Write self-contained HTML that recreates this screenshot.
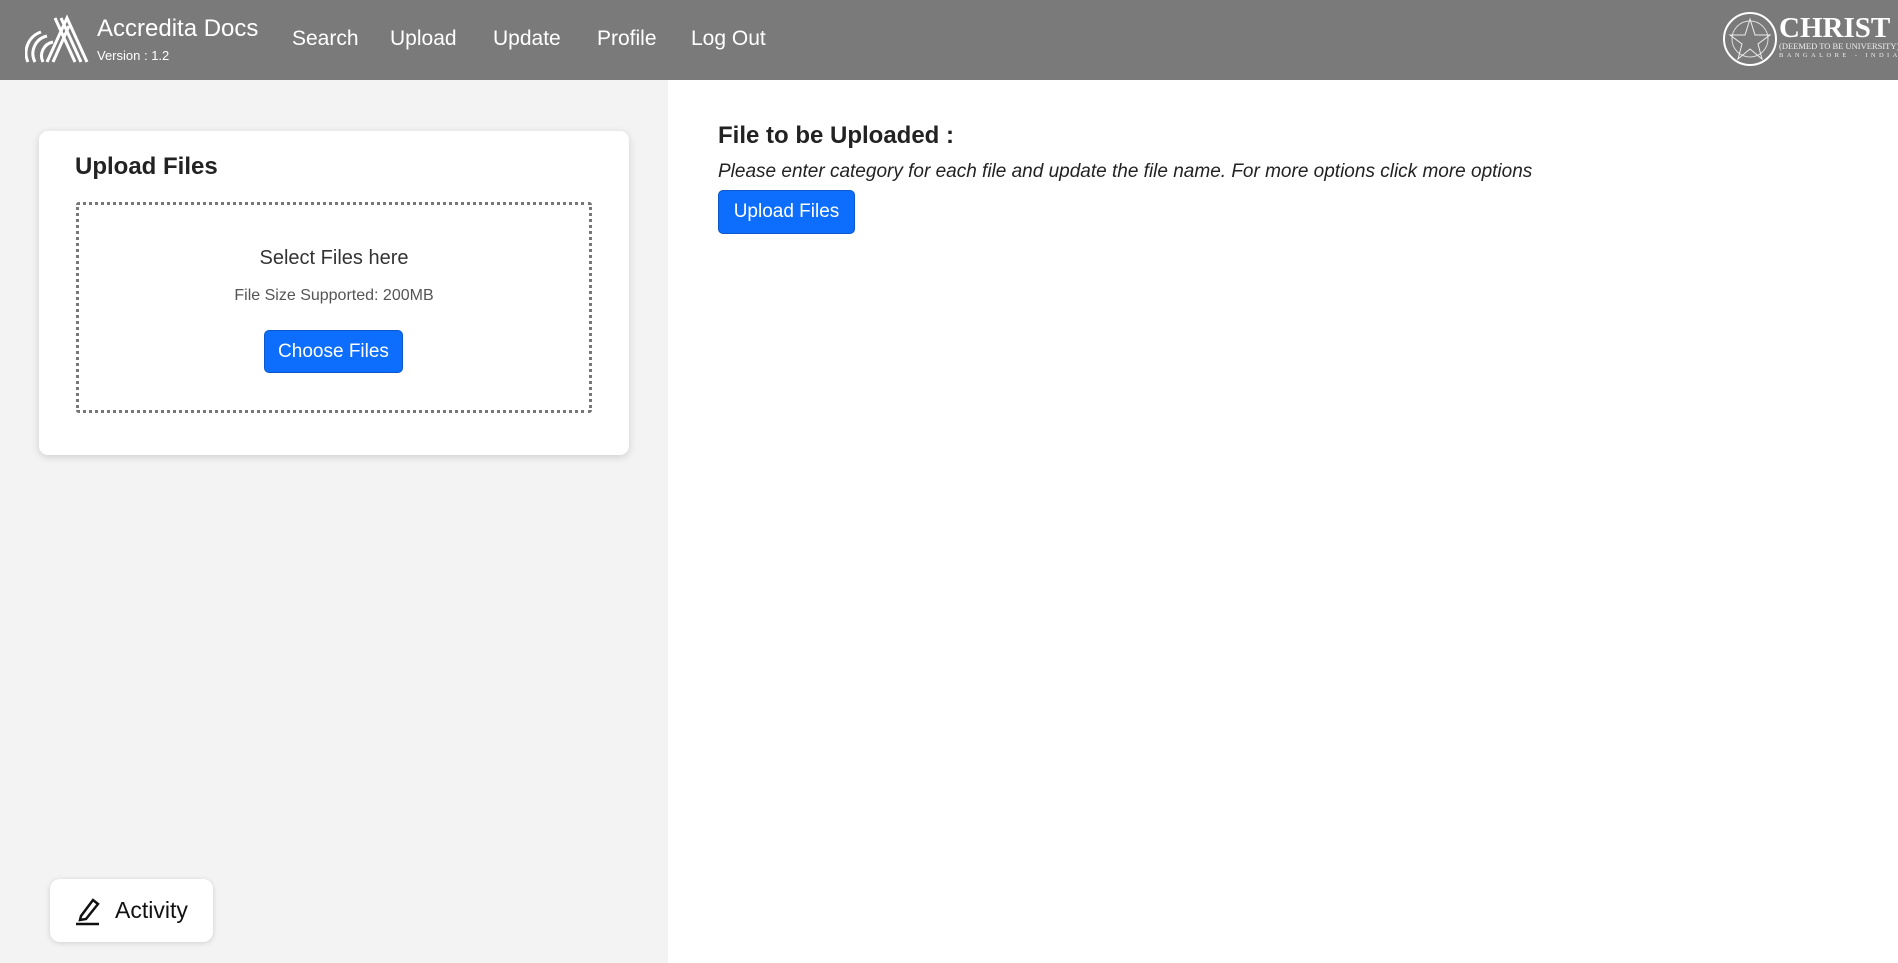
<!DOCTYPE html>
<html><head><style>
*{margin:0;padding:0;box-sizing:border-box}
body{width:1898px;height:963px;overflow:hidden;font-family:"Liberation Sans",sans-serif;background:#fff;position:relative}
.nav{position:absolute;left:0;top:0;width:1898px;height:80px;background:#7a7a7a;color:#fff}
.nav .t{position:absolute;left:97px;top:15px;font-size:24px}
.nav .v{position:absolute;left:97px;top:48px;font-size:13px}
.nav .l{position:absolute;top:27px;font-size:21px}
.left{position:absolute;left:0;top:80px;width:668px;height:883px;background:#f3f3f3}
.card{position:absolute;left:39px;top:131px;width:590px;height:324px;background:#fff;border-radius:9px;box-shadow:0 2px 8px rgba(0,0,0,.15)}
.btn{position:absolute;background:#0d6efd;color:#fff;border:1px solid #0a58ca;border-radius:5px;font-size:19px;text-align:center}
.drop{position:absolute;left:76px;top:202px;width:516px;height:211px;border:3px dotted #777;border-radius:3px}
.act{position:absolute;left:50px;top:879px;width:163px;height:63px;background:#fff;border-radius:10px;box-shadow:0 1px 6px rgba(0,0,0,.15);font-size:23px}
.sm{position:absolute;left:1779px;color:#eee;font-family:'Liberation Serif',serif;white-space:nowrap}
</style></head><body>
<div class="nav">
<svg style="position:absolute;left:25px;top:12px" width="64" height="52" viewBox="0 0 64 52" fill="none" stroke="#fff" stroke-width="3">
<path d="M22 50 L42 6 L62 50"/><path d="M28 50 L44 14 M36 6 L56 50"/><path d="M18 50 A14 14 0 0 1 28 30"/><path d="M10 50 A18 18 0 0 1 22 24"/><path d="M3 50 A22 22 0 0 1 16 20"/><path d="M30 6 L50 50"/>
</svg>
<div class="t">Accredita Docs</div><div class="v">Version : 1.2</div>
<div class="l" style="left:292px">Search</div><div class="l" style="left:390px">Upload</div><div class="l" style="left:493px">Update</div><div class="l" style="left:597px">Profile</div><div class="l" style="left:691px">Log Out</div>
<svg style="position:absolute;left:1722px;top:11px" width="56" height="56"><circle cx="28" cy="28" r="26" fill="none" stroke="#fff" stroke-width="2"/><circle cx="28" cy="28" r="18" fill="none" stroke="#ddd" stroke-width="1"/><path d="M28 8 L33 24 L48 24 L36 33 L40 48 L28 38 L16 48 L20 33 L8 24 L23 24Z" fill="none" stroke="#eee"/></svg>
<div class="sm" style="top:12px;color:#fff;font-weight:bold;font-size:29px">CHRIST</div>
<div class="sm" style="top:41px;font-size:8.5px">(DEEMED TO BE UNIVERSITY)</div>
<div class="sm" style="top:52px;font-size:6.5px;letter-spacing:3.4px">BANGALORE - INDIA</div>
</div>
<div class="left"></div>
<div class="card">
<div style="position:absolute;left:36px;top:22px;font-size:24px;font-weight:bold;color:#222">Upload Files</div>
</div>
<div class="drop">
<div style="position:absolute;left:0;right:0;top:42px;text-align:center;font-size:20px;color:#333">Select Files here</div>
<div style="position:absolute;left:0;right:0;top:82px;text-align:center;font-size:16px;color:#555">File Size Supported: 200MB</div>
</div>
<div class="btn" style="left:264px;top:330px;width:139px;height:43px;line-height:41px">Choose Files</div>
<div style="position:absolute;left:718px;top:122px;font-size:24px;font-weight:bold;color:#222">File to be Uploaded :</div>
<div style="position:absolute;left:718px;top:161px;font-size:19px;font-style:italic;color:#222">Please enter category for each file and update the file name. For more options click more options</div>
<div class="btn" style="left:718px;top:190px;width:137px;height:44px;line-height:42px">Upload Files</div>
<div class="act">
<svg style="position:absolute;left:25px;top:17px" width="26" height="30" viewBox="0 0 26 30" fill="none" stroke="#111" stroke-width="2.5"><path d="M6 20 L18 4 L23 8 L11 23 L5 24 Z"/><path d="M1 28 H24"/></svg>
<div style="position:absolute;left:65px;top:18px;color:#111">Activity</div>
</div>
</body></html>
